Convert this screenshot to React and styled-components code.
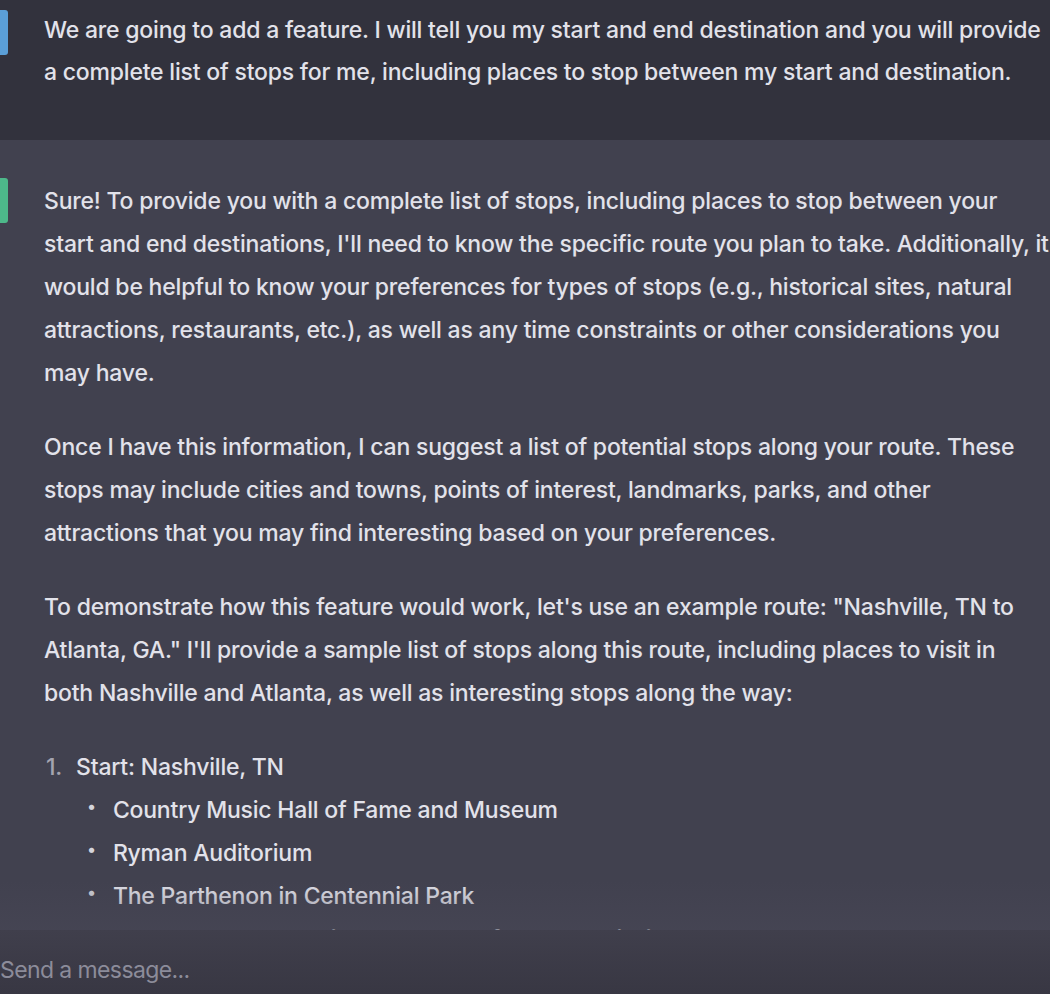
import React from "react";
import styled, { createGlobalStyle } from "styled-components";

const Global = createGlobalStyle`
  html, body { margin: 0; padding: 0; background: #41414f; }
  body { font-family: Inter, "Liberation Sans", sans-serif; -webkit-font-smoothing: antialiased; }
`;

const Page = styled.div`
  position: relative;
  width: 1050px;
  height: 994px;
  overflow: hidden;
  background: #41414f;
`;

const Band = styled.section`
  display: flex;
  align-items: flex-start;
  gap: 36px;
  background: ${(p) => (p.$user ? "#32323d" : "#41414f")};
  padding: ${(p) => (p.$user ? "9px 0 0 0" : "40px 0 0 0")};
  height: ${(p) => (p.$user ? "131px" : "auto")};
  box-sizing: content-box;
`;

const Avatar = styled.div`
  flex: none;
  width: 45px;
  height: 45px;
  margin-left: -37px;
  margin-top: ${(p) => p.$top || 0}px;
  border-radius: 3px;
  background: ${(p) => p.$color};
`;

const Body = styled.div`
  flex: 1;
  min-width: 0;
  color: #e2e2ea;
  font-size: 23px;
  font-weight: 500;
  letter-spacing: -0.2px;
  line-height: ${(p) => (p.$user ? "42px" : "43px")};
  white-space: nowrap;
`;

const Line = styled.span`
  display: block;
`;

const Para = styled.p`
  margin: 0 0 31px 0;
`;

const List = styled.ol`
  margin: 0;
  padding: 0;
  list-style: none;
`;

const Item = styled.li`
  display: flex;
  flex-direction: column;
`;

const ItemHead = styled.div`
  display: flex;
  gap: 8px;
`;

const Num = styled.span`
  color: #a4a4b0;
  width: 22px;
  padding-left: 2px;
`;

const Bullets = styled.ul`
  margin: 0;
  padding: 0 0 0 43px;
  list-style: none;
`;

const Bullet = styled.li`
  display: flex;
  align-items: flex-start;
  gap: 17px;
  &::before {
    content: "•";
    color: #d4d4dc;
    font-size: 17px;
    line-height: 34px;
  }
`;

const InputBar = styled.footer`
  position: absolute;
  left: 0;
  right: 0;
  bottom: 0;
  height: 64px;
  box-sizing: border-box;
  padding-top: 27px;
  display: flex;
  align-items: flex-start;
  background: linear-gradient(#403f4c, #383743);
  &::before {
    content: "";
    position: absolute;
    left: 0;
    right: 0;
    top: -50px;
    height: 50px;
    background: linear-gradient(rgba(72, 71, 86, 0), rgba(72, 71, 86, 0.55));
    pointer-events: none;
  }
`;

const Placeholder = styled.span`
  margin-left: 0;
  color: #8c8c9a;
  font-size: 23px;
  line-height: 26px;
  letter-spacing: -0.6px;
`;

const p1 = [
  "Sure! To provide you with a complete list of stops, including places to stop between your",
  "start and end destinations, I'll need to know the specific route you plan to take. Additionally, it",
  "would be helpful to know your preferences for types of stops (e.g., historical sites, natural",
  "attractions, restaurants, etc.), as well as any time constraints or other considerations you",
  "may have.",
];
const p2 = [
  "Once I have this information, I can suggest a list of potential stops along your route. These",
  "stops may include cities and towns, points of interest, landmarks, parks, and other",
  "attractions that you may find interesting based on your preferences.",
];
const p3 = [
  "To demonstrate how this feature would work, let's use an example route: \"Nashville, TN to",
  "Atlanta, GA.\" I'll provide a sample list of stops along this route, including places to visit in",
  "both Nashville and Atlanta, as well as interesting stops along the way:",
];

const Lines = ({ lines }) => lines.map((l, i) => <Line key={i}>{l}</Line>);

export default function App() {
  return (
    <Page>
      <Global />
      <Band $user>
        <Avatar $color="#5b9fd8" $top={1} />
        <Body $user>
          <Lines
            lines={[
              "We are going to add a feature. I will tell you my start and end destination and you will provide",
              "a complete list of stops for me, including places to stop between my start and destination.",
            ]}
          />
        </Body>
      </Band>
      <Band>
        <Avatar $color="#4db88a" $top={-2} />
        <Body>
          <Para><Lines lines={p1} /></Para>
          <Para><Lines lines={p2} /></Para>
          <Para><Lines lines={p3} /></Para>
          <List>
            <Item>
              <ItemHead><Num>1.</Num><span>Start: Nashville, TN</span></ItemHead>
              <Bullets>
                <Bullet>Country Music Hall of Fame and Museum</Bullet>
                <Bullet>Ryman Auditorium</Bullet>
                <Bullet>The Parthenon in Centennial Park</Bullet>
              </Bullets>
            </Item>
            <Item>
              <ItemHead><Num>2.</Num><span>Stop: Chattanooga, TN (about 2 hours from Nashville)</span></ItemHead>
            </Item>
          </List>
        </Body>
      </Band>
      <InputBar>
        <Placeholder>Send a message...</Placeholder>
      </InputBar>
    </Page>
  );
}
